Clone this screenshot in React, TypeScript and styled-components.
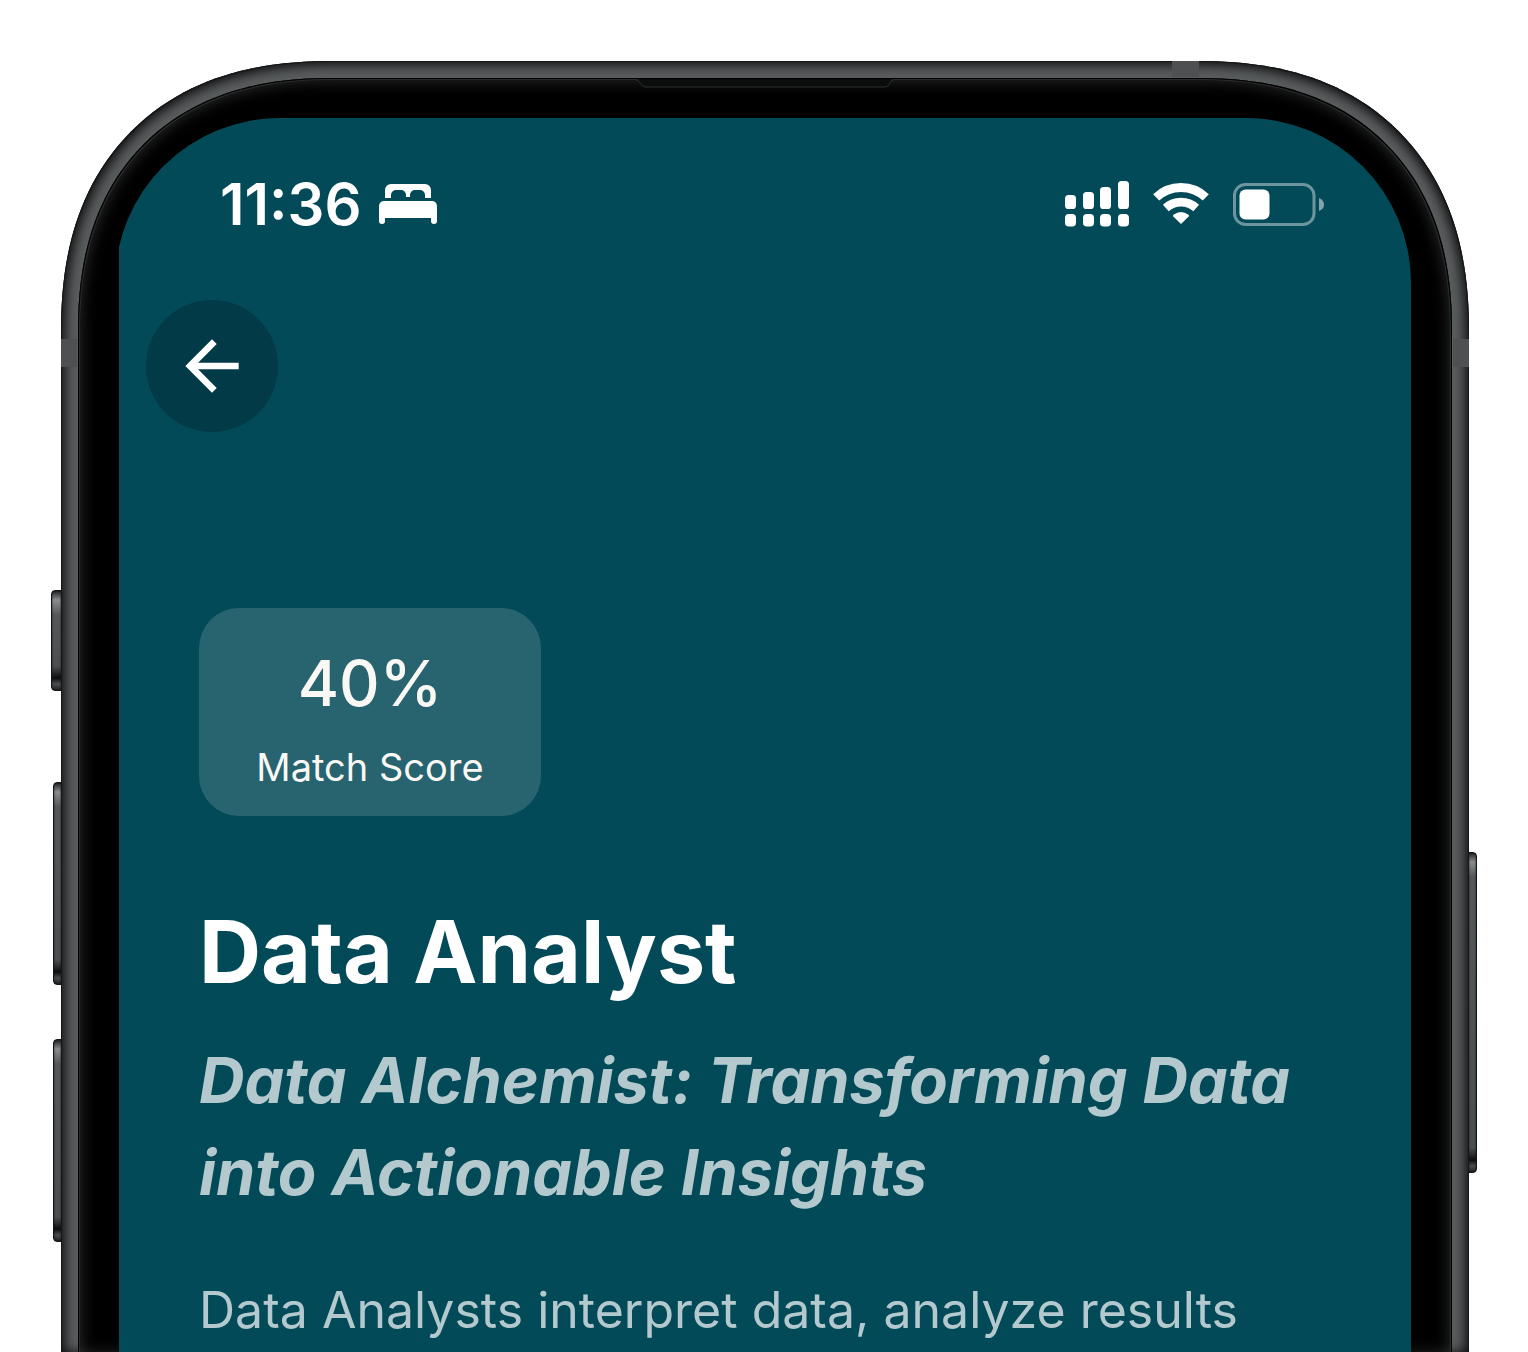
import React from "react";
import styled, { createGlobalStyle } from "styled-components";

const GlobalStyle = createGlobalStyle`
  *, *::before, *::after { box-sizing: border-box; }
  body { margin: 0; background: #ffffff; }
`;

const Page = styled.main`
  min-height: 100vh;
  padding: 61px 59px 0 61px;
  display: flex;
  overflow: hidden;
  font-family: Inter, "Liberation Sans", sans-serif;
  color: #ffffff;
`;

const Phone = styled.div`
  position: relative;
  flex: 1;
  min-width: 0;
  display: flex;
`;

const Metal = styled.div`
  position: relative;
  flex: 1;
  min-width: 0;
  display: flex;
  padding: 17px 17px 0;
  overflow: hidden;
  border-radius: 238px 238px 0 0;
  background: #5a5d5e;
  box-shadow: inset 0 0 0 1px #151617, inset 0 0 12px 4px #0c0d0e;

  @supports (corner-shape: superellipse(1.2)) {
    border-radius: 270px 270px 0 0;
    corner-shape: superellipse(1.2);
  }
`;

const Bezel = styled.div`
  position: relative;
  flex: 1;
  min-width: 0;
  display: flex;
  padding: 40px 41px 0;
  border-radius: 221px 221px 0 0;
  background: #000000;
  box-shadow: inset 0 0 0 1px #000000, inset 0 0 0 2px #2a2b2c, inset 0 0 16px 2px #2c2d2e;

  @supports (corner-shape: superellipse(1.2)) {
    border-radius: 253px 253px 0 0;
    corner-shape: superellipse(1.2);
  }
`;

const Earpiece = styled.div`
  position: absolute;
  top: 0;
  left: 50%;
  width: 258px;
  height: 10px;
  margin-left: -129px;
  svg { display: block; width: 100%; height: 100%; }
`;

const Band = styled.span<{ $side: "left" | "right" | "top" }>`
  position: absolute;
  background: #4e5051;
  ${({ $side }) =>
    $side === "top"
      ? "top: 0; right: 270px; width: 27px; height: 16px;"
      : `${$side}: 0; top: 278px; width: 16px; height: 28px;`}
`;

const SideKey = styled.span<{ $side: "left" | "right"; $top: number; $length: number; $depth: number }>`
  position: absolute;
  ${({ $side, $depth }) => `${$side}: -${$depth}px;`}
  top: ${({ $top }) => $top}px;
  width: ${({ $depth }) => $depth + 1}px;
  height: ${({ $length }) => $length}px;
  border: 1px solid #131415;
  border-radius: ${({ $side }) => ($side === "left" ? "4px 0 0 4px" : "0 4px 4px 0")};
  background: linear-gradient(#202223 0, #8a8d8e 9px, #55585a 24px, #4c4f50 calc(100% - 24px), #0c0d0e calc(100% - 12px), #4b4e4f calc(100% - 6px), #202223 100%);
  box-shadow: inset 0 0 2px #151617;
`;

const Viewport = styled.div`
  flex: 1;
  min-width: 0;
  display: flex;
  overflow: hidden;
`;

const Screen = styled.div`
  flex: 1;
  min-width: 0;
  margin-left: -4px;
  padding-left: 4px;
  border-radius: 165px 165px 0 0;
  background: #034a59;
`;

const StatusBar = styled.header`
  height: 172px;
  padding: 0 87px 0 101px;
  display: flex;
  align-items: center;
  justify-content: space-between;
`;

const StatusGroup = styled.div<{ $gap: number }>`
  display: flex;
  align-items: center;
  gap: ${({ $gap }) => $gap}px;
  svg { display: block; }
`;

const Time = styled.time`
  font-size: 58px;
  line-height: 68px;
  font-weight: 600;
`;

const TopBar = styled.nav`
  padding: 10px 27px 0;
`;

const BackButton = styled.button`
  width: 132px;
  height: 132px;
  padding: 0;
  border: 0;
  border-radius: 50%;
  display: grid;
  place-items: center;
  background: #033a47;
  color: #ffffff;
  cursor: pointer;
`;

const Content = styled.article`
  padding: 176px 80px 0;
`;

const ScoreCard = styled.section`
  width: 342px;
  height: 208px;
  padding-top: 18px;
  border-radius: 40px;
  display: flex;
  flex-direction: column;
  align-items: center;
  justify-content: center;
  gap: 20px;
  background: #286470;
  color: #faf8f4;
`;

const ScoreValue = styled.strong`
  font-size: 63px;
  line-height: 72px;
  font-weight: 500;
`;

const ScoreLabel = styled.span`
  font-size: 38px;
  line-height: 56px;
  font-weight: 400;
`;

const Title = styled.h1`
  margin: 80px 0 0;
  font-size: 86px;
  line-height: 112px;
  font-weight: 700;
`;

const Tagline = styled.h2`
  margin: 26px 0 0;
  font-size: 63px;
  line-height: 92px;
  font-weight: 700;
  font-style: italic;
  color: #b3c9ce;
`;

const Summary = styled.p`
  margin: 46px 0 0;
  font-size: 50px;
  line-height: 92px;
  font-weight: 400;
  color: #b3c9ce;
`;

const BedIcon = () => (
  <svg width="58" height="40" viewBox="0 0 58 40" fill="#fff" aria-label="Sleep focus" role="img">
    <path d="M6 14V6a6 6 0 0 1 6-6h34a6 6 0 0 1 6 6v8h-6v-3a5 5 0 0 0-5-5h-5a5 5 0 0 0-5 5v2h-4v-2a5 5 0 0 0-5-5h-5a5 5 0 0 0-5 5v3Z" />
    <path d="M0 22a5 5 0 0 1 5-5h48a5 5 0 0 1 5 5v15a3 3 0 0 1-6 0v-3H6v3a3 3 0 0 1-6 0Z" />
  </svg>
);

const SignalIcon = () => (
  <svg width="64" height="46" viewBox="0 0 64 46" fill="#fff" aria-label="Cellular signal" role="img">
    {[
      [0, 14, 14],
      [18, 11, 17],
      [35, 6, 22],
      [53, 0, 28],
    ].map(([x, y, h]) => (
      <g key={x}>
        <rect x={x} y={y} width="11" height={h} rx="3.6" />
        <rect x={x} y="33" width="11" height="12.5" rx="3.8" />
      </g>
    ))}
  </svg>
);

const WifiIcon = () => (
  <svg width="56" height="42" viewBox="0 0 56 42" fill="none" stroke="#fff" aria-label="Wi-Fi" role="img">
    <path d="M3.200 14.400A36 36 0 0 1 52.800 14.400" strokeWidth="8.800" />
    <path d="M12.800 25A22.500 22.500 0 0 1 43.200 25" strokeWidth="8.600" />
    <path d="M28 41 20.300 33.400Q19.600 32.500 20.500 31.800 28 26.200 35.500 31.800 36.400 32.500 35.700 33.400Z" fill="#fff" stroke="none" />
  </svg>
);

const BatteryIcon = () => (
  <svg width="91" height="43" viewBox="0 0 91 43" aria-label="Battery" role="img">
    <rect x="1.500" y="1.500" width="79.500" height="40" rx="11" fill="none" stroke="#6d959e" strokeWidth="3" />
    <rect x="6.500" y="6.500" width="30" height="30" rx="6" fill="#fff" />
    <path d="M86 15q5 2 5 6.500t-5 6.500Z" fill="#81a4ac" />
  </svg>
);

const BackIcon = () => (
  <svg width="80" height="80" viewBox="0 0 24 24" fill="currentColor" aria-hidden="true">
    <path d="M20 11H7.830l5.590-5.590L12 4l-8 8 8 8 1.410-1.410L7.830 13H20v-2z" />
  </svg>
);

export default function App() {
  return (
    <>
      <GlobalStyle />
      <Page>
        <Phone>
          <SideKey $side="left" $top={529} $length={101} $depth={10} />
          <SideKey $side="left" $top={721} $length={203} $depth={8} />
          <SideKey $side="left" $top={978} $length={203} $depth={8} />
          <SideKey $side="right" $top={791} $length={321} $depth={8} />
          <Metal>
            <Band $side="top" />
            <Band $side="left" />
            <Band $side="right" />
            <Bezel>
              <Earpiece>
                <svg viewBox="0 0 258 10" aria-hidden="true">
                  <path d="M0 1Q3 1 4 5T9 9H249Q253 9 254 5T258 1Z" fill="#0b0c0c" />
                  <path d="M0 2Q3 2 4 5T9 9H249Q253 9 254 5T258 2" fill="none" stroke="#2c2d2e" />
                </svg>
              </Earpiece>
              <Viewport>
                <Screen>
                  <StatusBar>
                    <StatusGroup $gap={17}>
                      <Time>11:36</Time>
                      <BedIcon />
                    </StatusGroup>
                    <StatusGroup $gap={24}>
                      <SignalIcon />
                      <WifiIcon />
                      <BatteryIcon />
                    </StatusGroup>
                  </StatusBar>
                  <TopBar>
                    <BackButton type="button" aria-label="Go back">
                      <BackIcon />
                    </BackButton>
                  </TopBar>
                  <Content>
                    <ScoreCard>
                      <ScoreValue>40%</ScoreValue>
                      <ScoreLabel>Match Score</ScoreLabel>
                    </ScoreCard>
                    <Title>Data Analyst</Title>
                    <Tagline>Data Alchemist: Transforming Data into Actionable Insights</Tagline>
                    <Summary>Data Analysts interpret data, analyze results</Summary>
                  </Content>
                </Screen>
              </Viewport>
            </Bezel>
          </Metal>
        </Phone>
      </Page>
    </>
  );
}
